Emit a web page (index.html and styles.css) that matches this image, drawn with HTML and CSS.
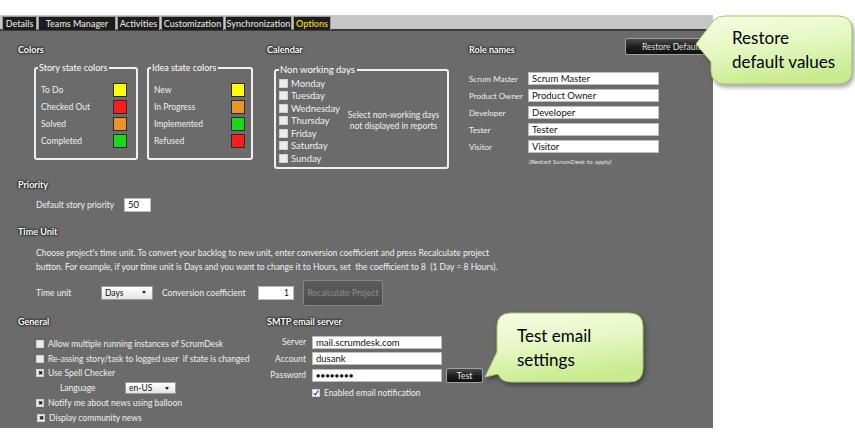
FILE: index.html
```html
<!DOCTYPE html>
<html>
<head>
<meta charset="utf-8">
<link rel="stylesheet" href="styles.css">
</head>
<body>
<div class="window">
  <div class="frame">
    <div class="tabs">
      <span class="tab t-details">Details</span>
      <span class="tab t-teams">Teams Manager</span>
      <span class="tab t-act">Activities</span>
      <span class="tab t-cust">Customization</span>
      <span class="tab t-sync">Synchronization</span>
      <span class="tab t-opt active">Options</span>
    </div>
    <div class="panel">
      <div class="toprow">
        <section class="colors">
          <div class="h">Colors</div>
          <div class="fsrow">
            <fieldset class="grp story">
              <legend>Story state colors</legend>
              <div class="crow"><span>To Do</span><i class="sw yellow"></i></div>
              <div class="crow"><span>Checked Out</span><i class="sw red"></i></div>
              <div class="crow"><span>Solved</span><i class="sw orange"></i></div>
              <div class="crow"><span>Completed</span><i class="sw green"></i></div>
            </fieldset>
            <fieldset class="grp idea">
              <legend>Idea state colors</legend>
              <div class="crow"><span>New</span><i class="sw yellow"></i></div>
              <div class="crow"><span>In Progress</span><i class="sw orange"></i></div>
              <div class="crow"><span>Implemented</span><i class="sw green"></i></div>
              <div class="crow"><span>Refused</span><i class="sw red"></i></div>
            </fieldset>
          </div>
        </section>
        <section class="calendar">
          <div class="h">Calendar</div>
          <fieldset class="grp cal">
            <legend>Non working days</legend>
            <div class="calin">
              <div class="days">
                <div class="day"><i class="cb"></i>Monday</div>
                <div class="day"><i class="cb"></i>Tuesday</div>
                <div class="day"><i class="cb"></i>Wednesday</div>
                <div class="day"><i class="cb"></i>Thursday</div>
                <div class="day"><i class="cb"></i>Friday</div>
                <div class="day"><i class="cb"></i>Saturday</div>
                <div class="day"><i class="cb"></i>Sunday</div>
              </div>
              <div class="calnote">Select non-working days<br>not displayed in reports</div>
            </div>
          </fieldset>
        </section>
        <section class="roles">
          <div class="rhead">
            <div class="h">Role names</div>
            <div class="btn restore">Restore Defaults</div>
          </div>
          <div class="rgrid">
            <span class="lbl">Scrum Master</span><span class="inp">Scrum Master</span>
            <span class="lbl">Product Owner</span><span class="inp">Product Owner</span>
            <span class="lbl">Developer</span><span class="inp">Developer</span>
            <span class="lbl">Tester</span><span class="inp">Tester</span>
            <span class="lbl">Visitor</span><span class="inp">Visitor</span>
          </div>
          <div class="rnote">(Restart ScrumDesk to apply)</div>
        </section>
      </div>

      <section class="priority">
        <div class="h">Priority</div>
        <div class="prow">
          <span class="plbl">Default story priority</span>
          <span class="inp pinp">50</span>
        </div>
      </section>

      <section class="timeunit">
        <div class="h">Time Unit</div>
        <p class="tdesc">Choose project's time unit. To convert your backlog to new unit, enter conversion coefficient and press Recalculate project<br>button. For example, if your time unit is Days and you want to change it to Hours, set &nbsp;the coefficient to 8 &nbsp;(1 Day = 8 Hours).</p>
        <div class="trow">
          <span class="tlbl">Time unit</span>
          <span class="sel tsel">Days<i class="arr"></i></span>
          <span class="clbl">Conversion coefficient</span>
          <span class="inp cinp">1</span>
          <span class="btn recalc">Recalculate Project</span>
        </div>
      </section>

      <div class="botrow">
        <section class="general">
          <div class="h">General</div>
          <div class="grows">
            <div class="grow"><i class="cb"></i>Allow multiple running instances of ScrumDesk</div>
            <div class="grow"><i class="cb"></i>Re-assing story/task to logged user &nbsp;if state is changed</div>
            <div class="grow"><i class="cb x">&#x2716;</i>Use Spell Checker</div>
            <div class="grow lang"><span class="langlbl">Language</span><span class="sel lsel">en-US<i class="arr"></i></span></div>
            <div class="grow"><i class="cb x">&#x2716;</i>Notify me about news using balloon</div>
            <div class="grow shift"><i class="cb x">&#x2716;</i>Display community news</div>
          </div>
        </section>
        <section class="smtp">
          <div class="h">SMTP email server</div>
          <div class="sgrid">
            <span class="slbl">Server</span><span class="inp sinp">mail.scrumdesk.com</span>
            <span class="slbl">Account</span><span class="inp sinp">dusank</span>
            <span class="slbl">Password</span><span class="pwrow"><span class="inp sinp pw">&#x25CF;&#x25CF;&#x25CF;&#x25CF;&#x25CF;&#x25CF;&#x25CF;&#x25CF;</span><span class="btn test">Test</span></span>
          </div>
          <div class="enrow"><i class="cb chk"><svg viewBox="0 0 8 8" width="8" height="8"><path d="M1.2 4.2 L3.2 6.6 L7 0.8" fill="none" stroke="#1a3ea8" stroke-width="1.4"/></svg></i>Enabled email notification</div>
        </section>
      </div>
    </div>
  </div>

  <div class="callout c-restore">
    <svg class="bubble" viewBox="0 0 167 80" width="167" height="80">
      <defs>
        <linearGradient id="g1" x1="0" y1="0" x2="0.3" y2="1">
          <stop offset="0" stop-color="#f6fde6"/>
          <stop offset="0.5" stop-color="#e6f8c4"/>
          <stop offset="1" stop-color="#c9ec92"/>
        </linearGradient>
      </defs>
      <path d="M37 6 H150 Q164 6 164 20 V60 Q164 74 150 74 H37 Q23 74 23 60 V52 L8 34 L26 10 Q30 6 37 6 Z" fill="url(#g1)" stroke="#a6c96a" stroke-width="1"/>
    </svg>
    <div class="ctext">Restore<br>default values</div>
  </div>

  <div class="callout c-test">
    <svg class="bubble" viewBox="0 0 168 82" width="168" height="82">
      <defs>
        <linearGradient id="g2" x1="0" y1="0" x2="0.3" y2="1">
          <stop offset="0" stop-color="#f6fde6"/>
          <stop offset="0.5" stop-color="#e6f8c4"/>
          <stop offset="1" stop-color="#c9ec92"/>
        </linearGradient>
      </defs>
      <path d="M29 5 H147 Q161 5 161 19 V60 Q161 74 147 74 H29 Q19 74 16 66 L3 69 L15 44 V19 Q15 5 29 5 Z" fill="url(#g2)" stroke="#a6c96a" stroke-width="1"/>
    </svg>
    <div class="ctext">Test email<br>settings</div>
  </div>
</div>
</body>
</html>
```

FILE: styles.css
```css
* { box-sizing: border-box; }
html, body { margin: 0; padding: 0; }
body {
  width: 855px;
  height: 434px;
  overflow: hidden;
  background: #ffffff;
  font-family: Lato, "Open Sans", "Liberation Sans", sans-serif;
  font-size: 8.5px;
  color: #f0f0f0;
}
.window {
  position: relative;
  width: 855px;
  height: 434px;
  padding-top: 15px;
}
.frame { width: 713px; }

/* tabs */
.tabs {
  display: flex;
  height: 16px;
  background: #c7c7c7;
  border-bottom: 2px solid #3a3a3a;
  padding-left: 2px;
  gap: 1px;
}
.tab {
  height: 14px;
  margin-top: 1px;
  background: #1d1d1d;
  border: 1px solid #9a9a9a;
  border-bottom: none;
  color: #dcdcdc;
  font-size: 9px;
  font-weight: 600;
  line-height: 13px;
  text-align: center;
  white-space: nowrap;
  overflow: hidden;
}
.t-details { width: 35px; }
.t-teams { width: 78px; }
.t-act { width: 43px; }
.t-cust { width: 63px; }
.t-sync { width: 67px; }
.t-opt { width: 38px; }
.tab.active { color: #f2d600; }

/* panel */
.panel {
  background: #6b6b6b;
  height: 397px;
  padding-left: 18px;
}
.h {
  font-weight: bold;
  font-size: 9px;
  line-height: 12px;
  height: 12px;
  color: #ffffff;
  text-shadow: 0 0 3px #000, 0 0 2px #000;
  white-space: nowrap;
}

.toprow {
  display: flex;
  align-items: flex-start;
  padding-top: 13px;
}
.colors { width: 249px; }
.calendar { width: 202px; }
.roles { flex: 1; }

.fsrow {
  display: flex;
  gap: 9px;
  margin-left: 16px;
  margin-top: 6px;
}
fieldset.grp {
  margin: 0;
  border: 2px solid #f0f0f0;
  border-radius: 3px;
  min-width: 0;
}
fieldset.grp legend {
  padding: 0 2px 0 1px;
  margin-left: -3px;
  line-height: 12px;
  font-size: 9px;
  color: #ffffff;
  white-space: nowrap;
}
fieldset.story { width: 104px; padding: 7px 9px 9px 5px; }
fieldset.idea { width: 106px; padding: 7px 6px 9px 5px; }
.crow {
  display: flex;
  justify-content: space-between;
  align-items: center;
  height: 17px;
  white-space: nowrap;
}
.sw {
  display: block;
  width: 14px;
  height: 14px;
  border: 1px solid #2b2b2b;
}
.yellow { background: #ffff00; }
.red { background: #ff1b1b; }
.orange { background: #e8962b; }
.green { background: #1ad81a; }

/* calendar */
fieldset.cal {
  width: 175px;
  margin: 8px 0 0 7px;
  padding: 1px 3px 2px 3px;
}
fieldset.cal legend { font-size: 9.5px; margin-left: 0; }
.calin { display: flex; align-items: center; }
.days { width: 60px; flex: none; }
.day {
  display: flex;
  align-items: center;
  height: 12.5px;
  font-size: 9.5px;
  white-space: nowrap;
}
.cb {
  display: inline-flex;
  align-items: center;
  justify-content: center;
  width: 9px;
  height: 9px;
  background: #ececec;
  border: 1px solid #d0d0d0;
  margin-right: 3px;
  flex: none;
  font-style: normal;
}
.calnote {
  flex: 1;
  text-align: center;
  font-size: 8.5px;
  line-height: 11px;
  white-space: nowrap;
  padding-left: 4px;
}

/* roles */
.rhead { display: flex; align-items: flex-start; }
.btn {
  display: flex;
  align-items: center;
  justify-content: center;
  white-space: nowrap;
  border: 1px solid #a0a0a0;
  border-radius: 2px;
  background: linear-gradient(#4a4a4a, #1c1c1c 55%, #101010);
  color: #e0e0e0;
  font-size: 8.5px;
}
.restore {
  margin-left: auto;
  margin-right: 1px;
  margin-top: -6px;
  width: 87px;
  height: 17px;
  justify-content: flex-start;
  padding-left: 16px;
}
.rgrid {
  display: grid;
  grid-template-columns: 59px 131px;
  grid-auto-rows: 13px;
  row-gap: 4px;
  margin-top: 16px;
  align-items: center;
}
.lbl { white-space: nowrap; font-size: 8px; }
.inp {
  display: flex;
  align-items: center;
  height: 13px;
  background: #ffffff;
  border: 1px solid #bdbdbd;
  color: #111;
  font-size: 9.5px;
  padding-left: 3px;
  white-space: nowrap;
}
.rnote {
  margin-left: 60px;
  margin-top: 4px;
  font-size: 6.5px;
  line-height: 9px;
  color: #e6e6e6;
}

/* priority */
.priority { margin-top: 10px; }
.prow {
  display: flex;
  align-items: center;
  margin-left: 18px;
  margin-top: 7px;
}
.plbl { width: 88px; white-space: nowrap; }
.pinp { width: 27px; height: 14px; }

/* time unit */
.timeunit { margin-top: 14px; }
.tdesc {
  margin: 8px 0 0 18px;
  line-height: 14px;
  white-space: nowrap;
}
.trow {
  display: flex;
  align-items: center;
  margin-left: 18px;
  margin-top: 6px;
  height: 26px;
}
.tlbl { width: 65px; }
.sel {
  position: relative;
  display: flex;
  align-items: center;
  background: linear-gradient(#ffffff, #e4e4e4);
  border: 1px solid #9a9a9a;
  color: #111;
  font-size: 8.5px;
  padding-left: 3px;
}
.arr {
  position: absolute;
  right: 6px;
  top: 50%;
  margin-top: -1.5px;
  width: 0;
  height: 0;
  border-left: 2.5px solid transparent;
  border-right: 2.5px solid transparent;
  border-top: 3.5px solid #222;
}
.tsel { width: 52px; height: 14px; }
.clbl { width: 96px; margin-left: 9px; white-space: nowrap; }
.cinp {
  width: 36px;
  height: 14px;
  justify-content: flex-end;
  padding-right: 4px;
  font-size: 8.5px;
}
.recalc {
  margin-left: 9px;
  width: 80px;
  height: 26px;
  background: linear-gradient(#5c5c5c, #4c4c4c);
  border: 1px solid #858585;
  color: #8e8e8e;
}

/* bottom */
.botrow {
  display: flex;
  align-items: flex-start;
  margin-top: 10px;
}
.general { width: 249px; }
.smtp { flex: 1; }
.grows { margin-left: 18px; margin-top: 9px; }
.grow {
  display: flex;
  align-items: center;
  height: 14.8px;
  white-space: nowrap;
}
.grow .cb { width: 8px; height: 8px; margin-right: 4px; }
.cb.x {
  font-size: 6px;
  line-height: 1;
  color: #111;
}
.grow.shift { padding-left: 1px; }
.langlbl { margin-left: 24px; width: 65px; }
.lsel { width: 51px; height: 12px; }

.sgrid {
  display: grid;
  grid-template-columns: 39px 176px;
  grid-auto-rows: 16.5px;
  column-gap: 6px;
  align-items: center;
  margin-top: 6.5px;
}
.slbl { text-align: right; white-space: nowrap; }
.sinp { width: 130px; height: 13px; }
.pwrow { display: flex; align-items: center; }
.pw { font-size: 7px; letter-spacing: 0.5px; }
.test {
  margin-left: 4px;
  width: 37px;
  height: 15px;
  font-size: 9px;
}
.enrow {
  display: flex;
  align-items: center;
  margin-left: 45px;
  margin-top: 2px;
  height: 14px;
  white-space: nowrap;
}
.enrow .cb { width: 8px; height: 8px; margin-right: 4px; background: #f4f4f4; }
.enrow .cb svg { display: block; }

/* callouts */
.callout { position: absolute; }
.bubble {
  display: block;
  filter: drop-shadow(2px 3px 2px rgba(0, 0, 0, 0.35));
}
.ctext {
  position: absolute;
  color: #000;
  font-family: Lato, "Open Sans", sans-serif;
  font-size: 17px;
  line-height: 24px;
  white-space: nowrap;
}
.c-restore { left: 688px; top: 10px; }
.c-restore .ctext { left: 44px; top: 16px; }
.c-test { left: 482px; top: 308px; }
.c-test .ctext { left: 35px; top: 16px; }
```
